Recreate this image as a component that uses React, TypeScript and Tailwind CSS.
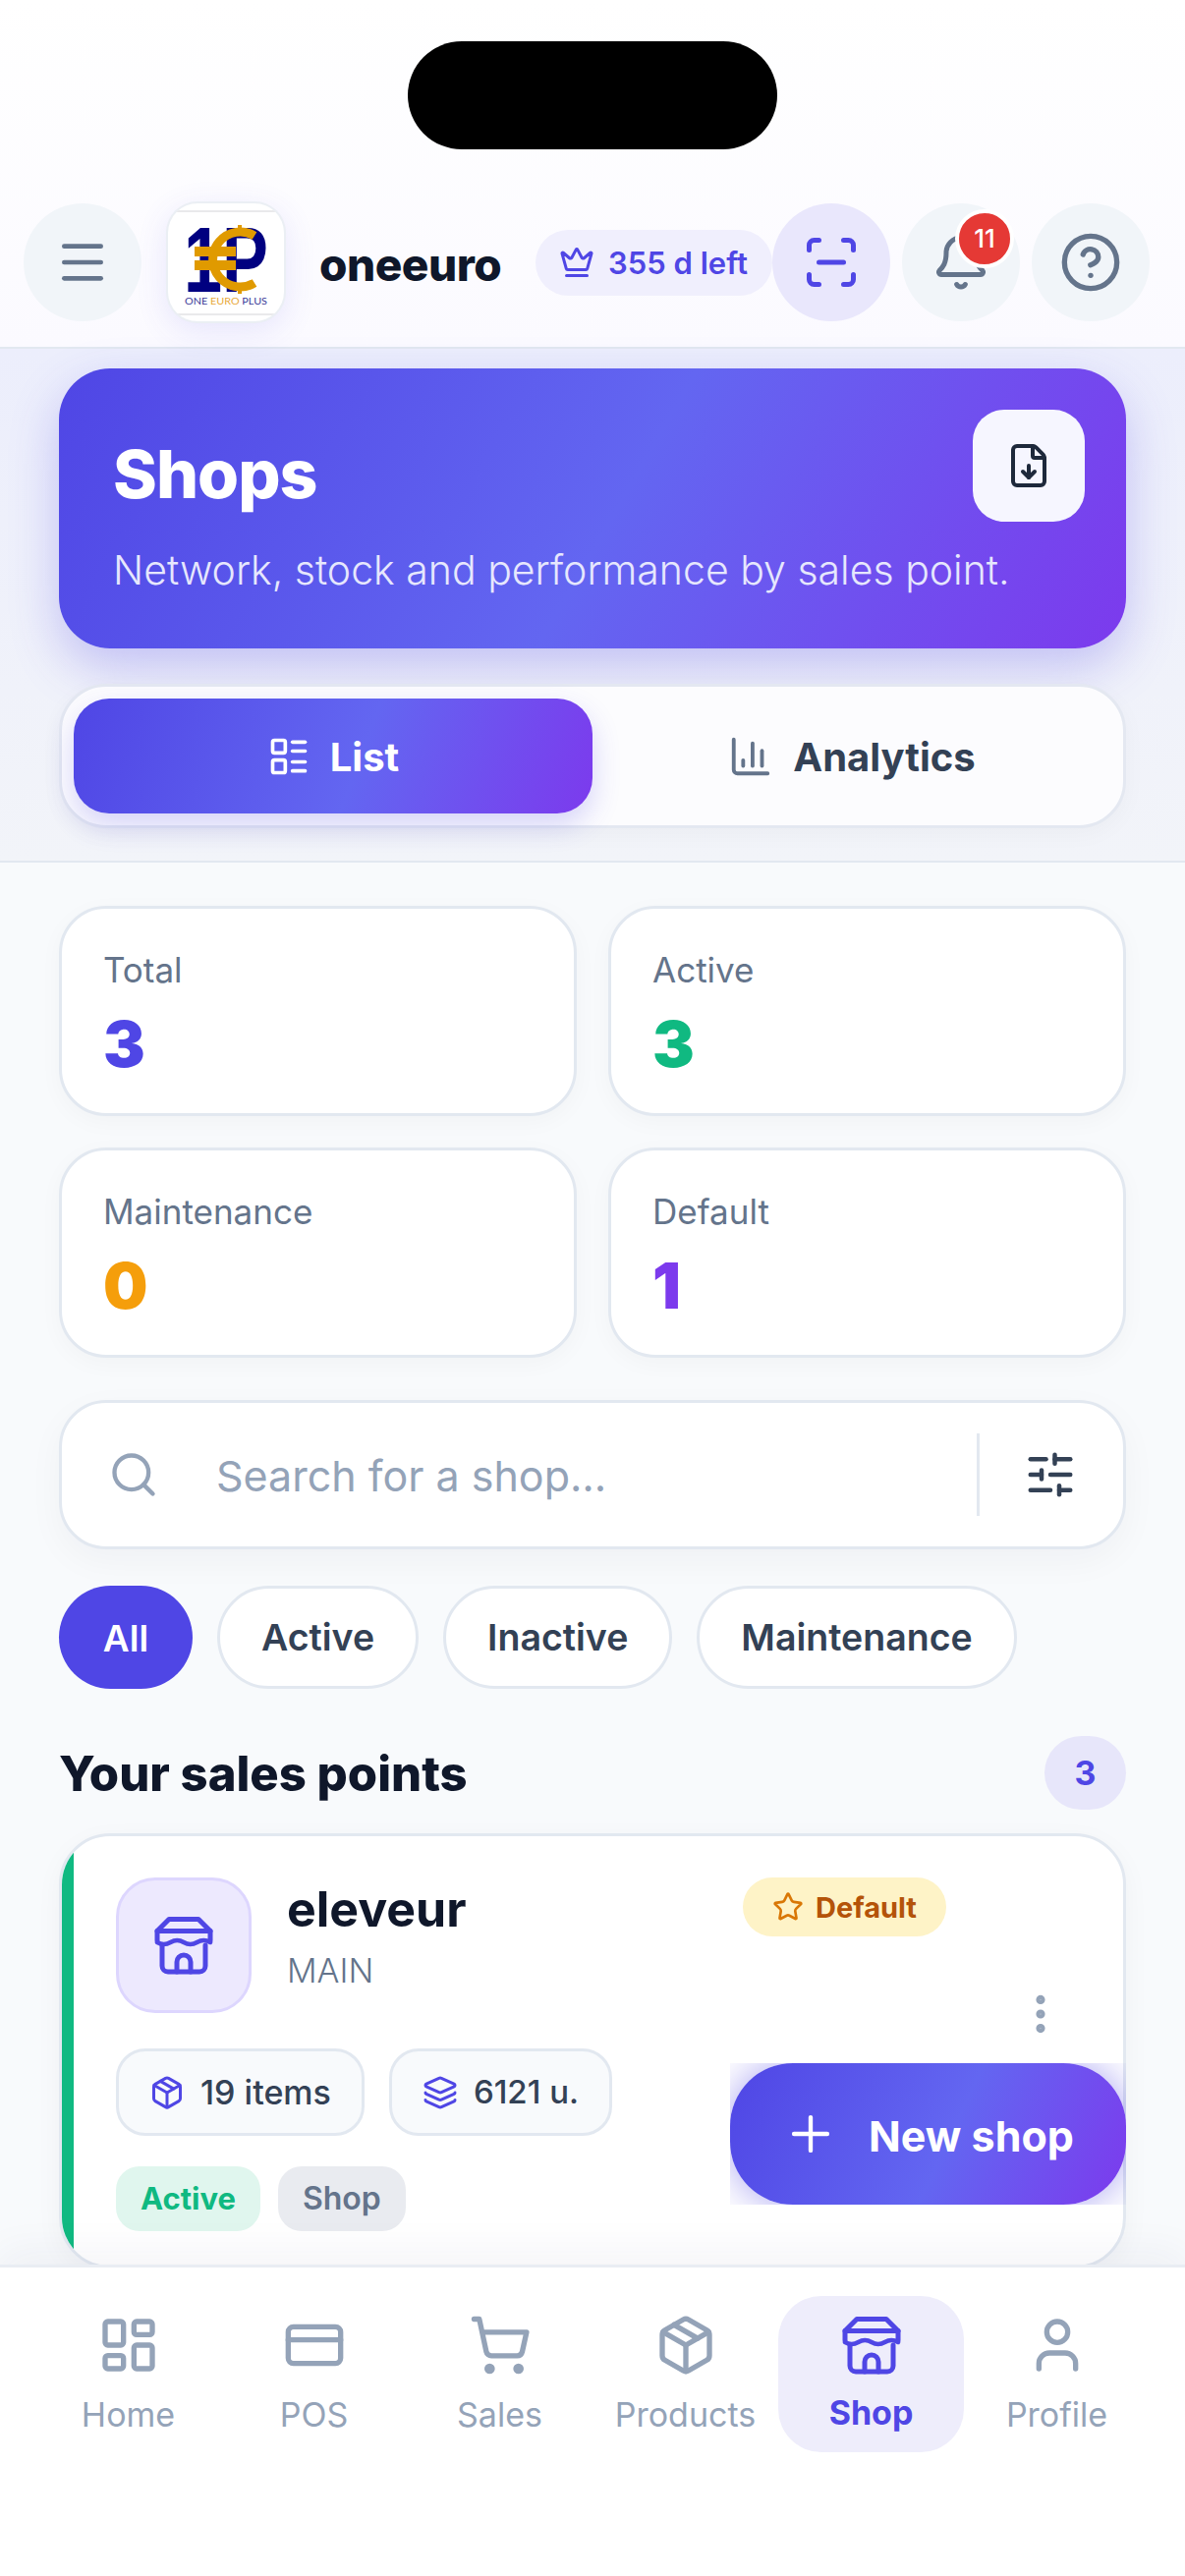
import {
  Bell,
  ChartColumn,
  CircleHelp,
  CreditCard,
  Crown,
  EllipsisVertical,
  FileDown,
  Layers,
  LayoutDashboard,
  LayoutList,
  Menu,
  Package,
  Plus,
  ScanLine,
  Search,
  ShoppingCart,
  SlidersHorizontal,
  Star,
  User,
} from "lucide-react";

// lucide's Store is too wide, this one follows the awning in the design
function StoreIcon({ size = 60 }: { size?: number; strokeWidth?: number }) {
  return (
    <svg width={size} height={size} viewBox="0 0 60 60" fill="none" stroke="currentColor" strokeWidth="5" strokeLinecap="round" strokeLinejoin="round">
      <path d="M3 15.5 15 3.5H45L57 15.5H3Z" />
      <path d="M3 15.5V25M57 15.5V25" />
      <path d="M3 27q6.75 4 13.5 0t13.5 0 13.5 0 13.5 0" strokeWidth="4.5" />
      <path d="M8 30V51a6 6 0 0 0 6 6H46a6 6 0 0 0 6-6V30" />
      <path d="M23 57V47a7 7 0 0 1 14 0V57" />
    </svg>
  );
}

const navItems = [
  { label: "Home", icon: LayoutDashboard },
  { label: "POS", icon: CreditCard },
  { label: "Sales", icon: ShoppingCart },
  { label: "Products", icon: Package },
  { label: "Shop", icon: StoreIcon, active: true },
  { label: "Profile", icon: User },
];

const stats = [
  { label: "Total", value: "3", color: "text-[#4f46e5]" },
  { label: "Active", value: "3", color: "text-[#10b981]" },
  { label: "Maintenance", value: "0", color: "text-[#f59e0b]" },
  { label: "Default", value: "1", color: "text-[#7c3aed]" },
];

function Logo() {
  return (
    <div className="relative z-10 h-[124px] w-[122px] shrink-0 overflow-hidden rounded-[32px] border-[2px] border-[#e2e8f0]/70 bg-white shadow-[0_8px_32px_rgba(79,70,229,0.12)]">
      <svg viewBox="0 0 118 120" className="h-full w-full">
        <line x1="0" y1="8" x2="118" y2="8" stroke="#d4d4d8" strokeWidth="1" />
        <line x1="0" y1="113" x2="118" y2="113" stroke="#d4d4d8" strokeWidth="1" />
        <text x="16" y="90" fontFamily="Liberation Sans, sans-serif" fontWeight="700" fontSize="94" fill="#000080" textLength="86" lengthAdjust="spacingAndGlyphs">
          1P
        </text>
        <path d="M88 33 A28 28 0 1 0 88 81" fill="none" stroke="#e09a00" strokeWidth="9" />
        <rect x="71" y="22" width="4" height="8" fill="#e09a00" />
        <rect x="71" y="84" width="4" height="8" fill="#e09a00" />
        <rect x="27" y="44" width="42" height="10" fill="#e09a00" />
        <rect x="27" y="58" width="42" height="10" fill="#e09a00" />
        <text x="59" y="103" textAnchor="middle" fontFamily="Lato, sans-serif" fontSize="10" fill="#3b3b98" textLength="84" lengthAdjust="spacingAndGlyphs">
          ONE <tspan fill="#e8a93a">EURO</tspan> PLUS
        </text>
      </svg>
    </div>
  );
}

function Header() {
  return (
    <header className="border-b-[2px] border-[#e2e8f0] bg-gradient-to-b from-white to-[#fbfaff]">
      <div className="mx-auto mt-[42px] h-[110px] w-[376px] rounded-full bg-black" />
      <div className="mt-[55px] flex h-[120px] items-center pl-[24px] pr-[36px]">
        <button className="flex h-[120px] w-[120px] shrink-0 items-center justify-center rounded-full bg-[#f1f5f9] text-[#64748b]">
          <Menu size={56} strokeWidth={2} />
        </button>
        <div className="ml-[25px]">
          <Logo />
        </div>
        <span className="ml-[34px] pt-[3px] text-[46px] font-extrabold leading-none tracking-[-0.5px] text-[#0f172a]">oneeuro</span>
        <div className="ml-auto flex h-[67px] w-[241px] shrink-0 items-center gap-[14px] rounded-full bg-[#f0effd] pl-[24px] text-[#4f46e5]">
          <Crown size={36} strokeWidth={2} />
          <span className="text-[31px] font-semibold leading-none">355 d left</span>
        </div>
        <button className="flex h-[120px] w-[120px] shrink-0 items-center justify-center rounded-full bg-[#e9e7fc] text-[#4f46e5]">
          <ScanLine size={60} strokeWidth={2} />
        </button>
        <button className="relative ml-[12px] flex h-[120px] w-[120px] shrink-0 items-center justify-center rounded-full bg-[#f1f5f9] text-[#64748b]">
          <Bell size={60} strokeWidth={2} />
          <span className="absolute left-[54px] top-[6px] flex h-[60px] w-[60px] items-center justify-center rounded-full border-[4px] border-white bg-[#e53935] text-[26px] font-medium leading-none text-white">
            11
          </span>
        </button>
        <button className="ml-[12px] flex h-[120px] w-[120px] shrink-0 items-center justify-center rounded-full bg-[#f1f5f9] text-[#64748b]">
          <CircleHelp size={64} strokeWidth={2} />
        </button>
      </div>
      <div className="h-[26px]" />
    </header>
  );
}

function HeroSection() {
  return (
    <section className="border-b-[2px] border-[#e2e8f0] bg-gradient-to-b from-[#eceefc] to-[#f2f4f9] px-[60px] pb-[33px] pt-[20px]">
      <div className="h-[285px] rounded-[52px] bg-[linear-gradient(120deg,#4f46e5_0%,#6366f1_52%,#7c3aed_100%)] pl-[55px] pr-[42px] pt-[42px] shadow-[0_20px_50px_rgba(79,70,229,0.28)]">
        <div className="flex items-start justify-between">
          <h1 className="pt-[25px] text-[68px] font-extrabold leading-[80px] tracking-[-1px] text-white">Shops</h1>
          <button className="flex h-[114px] w-[114px] items-center justify-center rounded-[32px] bg-[#f6f6ff] text-[#1e293b]">
            <FileDown size={48} strokeWidth={2} />
          </button>
        </div>
        <p className="mt-[24px] text-[41px] font-light leading-[50px] text-[#e6e7fd]">Network, stock and performance by sales point.</p>
      </div>
      <div className="mt-[36px] grid h-[147px] grid-cols-2 rounded-[48px] border-[3px] border-[#e4e8f1] bg-[#fcfcfe] p-[12px] shadow-[0_6px_24px_rgba(15,23,42,0.03)]">
        <button className="flex items-center justify-center gap-[20px] rounded-[36px] bg-[linear-gradient(110deg,#4f46e5_0%,#6366f1_55%,#7c3aed_100%)] text-white shadow-[0_12px_28px_rgba(79,70,229,0.22)]">
          <LayoutList size={44} strokeWidth={2} />
          <span className="pt-[2px] text-[40px] font-bold leading-none">List</span>
        </button>
        <button className="flex items-center justify-center gap-[20px] text-[#334155]">
          <ChartColumn size={46} strokeWidth={2} className="text-[#64748b]" />
          <span className="pt-[2px] text-[40px] font-bold leading-none">Analytics</span>
        </button>
      </div>
    </section>
  );
}

function StatCard({ label, value, color }: { label: string; value: string; color: string }) {
  return (
    <div className="h-[214px] rounded-[48px] border-[3px] border-[#e2e8f0] bg-white pl-[42px] pt-[38px] shadow-[0_6px_24px_rgba(15,23,42,0.03)]">
      <div className="text-[35px] leading-[48px] text-[#64748b]">{label}</div>
      <div className={`mt-[14px] text-[64px] font-black leading-[76px] ${color}`}>{value}</div>
    </div>
  );
}

function SearchBar() {
  return (
    <div className="mt-[43px] flex h-[152px] items-center rounded-[48px] border-[3px] border-[#e2e8f0] bg-white pl-[47px] shadow-[0_12px_36px_rgba(15,23,42,0.04)]">
      <Search size={52} strokeWidth={2} className="text-[#94a3b8]" />
      <span className="ml-[58px] pt-[2px] text-[43px] leading-none text-[#94a3b8]">Search for a shop…</span>
      <div className="ml-auto h-[84px] w-[3px] bg-[#e2e8f0]" />
      <SlidersHorizontal size={54} strokeWidth={2} className="ml-[45px] mr-[47px] text-[#334155]" />
    </div>
  );
}

function Filters() {
  return (
    <div className="mt-[37px] flex gap-[25px]">
      <button className="flex h-[105px] w-[136px] items-center justify-center rounded-full bg-[#4f46e5] pt-[2px] text-[37px] font-semibold text-white">All</button>
      {["Active", "Inactive", "Maintenance"].map((name) => (
        <button
          key={name}
          className="flex h-[105px] items-center justify-center rounded-full border-[3px] border-[#e2e8f0] bg-white px-[42px] pt-[2px] text-[37.5px] font-semibold text-[#334155]"
        >
          {name}
        </button>
      ))}
    </div>
  );
}

function ShopCard() {
  return (
    <div className="relative mt-[24px] h-[443px] overflow-hidden rounded-[52px] border-[3px] border-[#e2e8f0] bg-white shadow-[0_8px_28px_rgba(15,23,42,0.04)]">
      <div className="absolute bottom-0 left-0 top-0 w-[12px] bg-[#10b981]" />
      <div className="pl-[55px] pt-[42px]">
        <div className="flex h-[138px] items-start">
          <div className="flex h-[138px] w-[138px] shrink-0 items-center justify-center rounded-[40px] border-[3px] border-[#ddd6fe] bg-[#ede9fe] text-[#4f46e5]">
            <StoreIcon size={60} />
          </div>
          <div className="ml-[36px] flex-1 pt-[2px]">
            <div className="text-[50px] font-bold leading-[60px] text-[#0f172a]">eleveur</div>
            <div className="mt-[12px] text-[34px] font-light leading-[42px] text-[#64748b]">MAIN</div>
          </div>
          <div className="flex h-[60px] w-[207px] shrink-0 items-center justify-center gap-[12px] rounded-full bg-[#fef3c7] text-[#b45309]">
            <Star size={32} strokeWidth={2} className="text-[#d97706]" />
            <span className="text-[29px] font-bold leading-none">Default</span>
          </div>
          <EllipsisVertical size={50} strokeWidth={2.4} className="ml-[71px] mr-[59px] mt-[114px] shrink-0 text-[#94a3b8]" />
        </div>
        <div className="mt-[36px] flex gap-[25px]">
          <div className="flex h-[89px] items-center gap-[16px] rounded-[30px] border-[3px] border-[#e2e8f0] bg-[#f8fafc] px-[31px] text-[#4f46e5]">
            <Package size={36} strokeWidth={2} />
            <span className="text-[34px] font-medium text-[#334155]">19 items</span>
          </div>
          <div className="flex h-[89px] items-center gap-[16px] rounded-[30px] border-[3px] border-[#e2e8f0] bg-[#f8fafc] px-[31px] text-[#4f46e5]">
            <Layers size={36} strokeWidth={2} />
            <span className="text-[33px] font-medium text-[#334155]">6121 u.</span>
          </div>
        </div>
        <div className="mt-[31px] flex gap-[18px]">
          <span className="flex h-[66px] items-center rounded-[24px] bg-[#e0f6ee] px-[25px] text-[31px] font-bold text-[#10b981]">Active</span>
          <span className="flex h-[66px] items-center rounded-[24px] bg-[#e9ebf0] px-[25px] text-[32px] font-semibold text-[#64748b]">Shop</span>
        </div>
      </div>
    </div>
  );
}

function NewShopButton() {
  return (
    <div className="absolute bottom-[61px] right-[60px] z-20 h-[144px] w-[403px] overflow-hidden">
      <button className="flex h-full w-full items-center justify-center gap-[30px] rounded-[64px] bg-[linear-gradient(115deg,#4f46e5_0%,#6366f1_55%,#7c3aed_100%)] text-white shadow-[0_0_40px_rgba(79,70,229,0.5)]">
        <Plus size={58} strokeWidth={1.8} />
        <span className="pt-[4px] text-[43px] font-bold leading-none">New shop</span>
      </button>
    </div>
  );
}

function BottomNav() {
  return (
    <nav className="relative z-10 h-[317px] border-t-[3px] border-[#e9edf3] bg-white shadow-[0_-12px_40px_rgba(30,41,99,0.05)]">
      <div className="grid grid-cols-6 px-[36px] pt-[29px]">
        {navItems.map(({ label, icon: Icon, active }) => (
          <div
            key={label}
            className={`flex h-[159px] flex-col items-center rounded-[44px] ${active ? "bg-[#eeedfb] pt-[20px] text-[#4f46e5]" : "pt-[18px] text-[#94a3b8]"}`}
          >
            <Icon size={active ? 60 : 64} strokeWidth={2} />
            <span className={`mt-[19px] text-[34px] leading-[40px] ${active ? "font-bold" : "font-normal"}`}>{label}</span>
          </div>
        ))}
      </div>
    </nav>
  );
}

export default function App() {
  return (
    <div className="flex h-[2622px] w-[1206px] flex-col overflow-hidden bg-white font-[Inter,sans-serif]">
      <Header />
      <HeroSection />
      <main className="relative min-h-0 flex-1 overflow-hidden bg-[#f8fafc] px-[60px] pt-[44px]">
        <div className="grid grid-cols-2 gap-[32px]">
          {stats.map((stat) => (
            <StatCard key={stat.label} {...stat} />
          ))}
        </div>
        <SearchBar />
        <Filters />
        <div className="mt-[48px] flex h-[75px] items-center justify-between">
          <h2 className="pt-[2px] text-[49px] font-extrabold leading-none text-[#0f172a]">Your sales points</h2>
          <span className="flex h-[75px] w-[83px] items-center justify-center rounded-full bg-[#e7e6fa] text-[34px] font-bold text-[#4f46e5]">3</span>
        </div>
        <ShopCard />
        <NewShopButton />
      </main>
      <BottomNav />
    </div>
  );
}
